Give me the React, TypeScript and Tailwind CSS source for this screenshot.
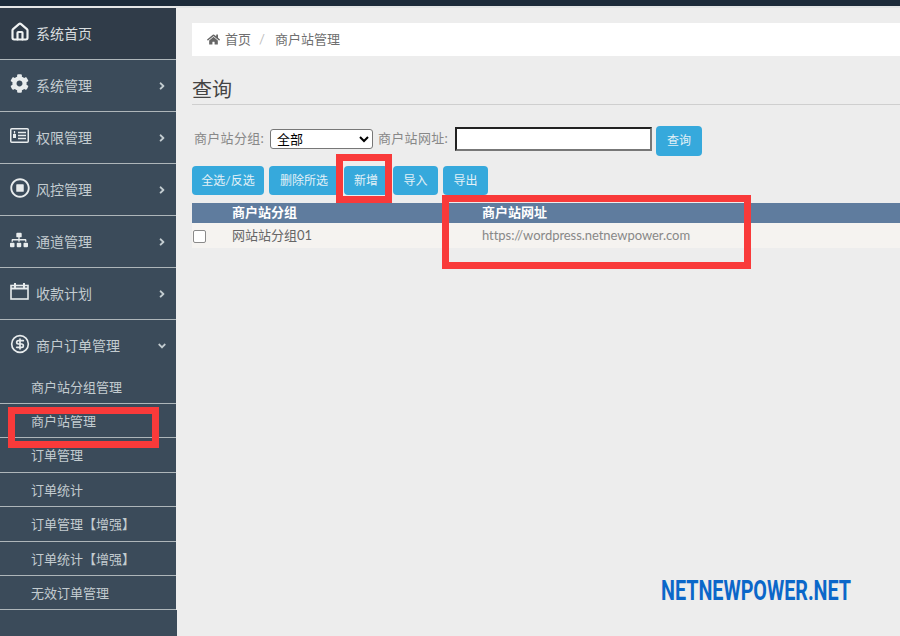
import { CircleDollarSign, House } from "lucide-react";
import { FaAngleDown, FaAngleRight, FaCog, FaHome, FaRegStopCircle, FaSitemap } from "react-icons/fa";

const font = "font-['Lato','Noto_Sans_CJK_SC',sans-serif]";

function CardIcon() {
  return (
    <svg width="19" height="15" viewBox="0 0 19 15" fill="none" stroke="currentColor">
      <rect x="0.75" y="0.75" width="17.5" height="13.5" rx="1" strokeWidth="1.5" />
      <path d="M8 4.5h8M8 7.5h8M8 10.5h8" strokeWidth="1.3" />
      <rect x="3" y="6" width="3" height="4" fill="currentColor" stroke="none" />
      <path d="M4.5 3v2.5" strokeWidth="1.3" />
    </svg>
  );
}

function CalendarIcon() {
  return (
    <svg width="19" height="17" viewBox="0 0 19 17" fill="none" stroke="currentColor">
      <rect x="1" y="2.5" width="17" height="13.5" strokeWidth="1.6" />
      <path d="M1 5.5h17" strokeWidth="2" />
      <path d="M5 0.5v4M14 0.5v4" strokeWidth="2" strokeLinecap="round" />
    </svg>
  );
}

const menus = [
  { name: "系统管理", icon: <FaCog size={19} /> },
  { name: "权限管理", icon: <CardIcon /> },
  { name: "风控管理", icon: <FaRegStopCircle size={20} /> },
  { name: "通道管理", icon: <FaSitemap size={18} /> },
  { name: "收款计划", icon: <CalendarIcon /> },
];

const subMenus = ["商户站分组管理", "商户站管理", "订单管理", "订单统计", "订单管理【增强】", "订单统计【增强】", "无效订单管理"];

function Sidebar() {
  return (
    <aside className="w-[176px] shrink-0 bg-[#3b4b5a] text-[#c3ccd0]">
      <div className="flex h-[52px] items-center border-b border-[#aeb6ba] bg-[#303c49] pl-[10px] text-sm text-[#d8dddf]">
        <span className="flex w-[26px] -translate-y-[2px] text-[#f0f3f3]">
          <House size={20} strokeWidth={2.6} />
        </span>
        系统首页
      </div>

      {menus.map((menu) => (
        <div key={menu.name} className="flex h-[52px] items-center border-b border-[#aeb6ba] pl-[10px] pr-[8px] text-sm">
          <span className="flex w-[26px] -translate-y-[2px] text-[#e8eced]">{menu.icon}</span>
          <span className="flex-1">{menu.name}</span>
          <FaAngleRight size={12} />
        </div>
      ))}

      <div className="flex h-[52px] items-center pl-[10px] pr-[8px] text-sm">
        <span className="flex w-[26px] -translate-y-[2px] text-[#e8eced]">
          <CircleDollarSign size={20} />
        </span>
        <span className="flex-1">商户订单管理</span>
        <FaAngleDown size={12} />
      </div>

      {subMenus.map((name, i) => (
        <div
          key={name}
          className={`flex items-center border-b border-[#aeb6ba] pl-[31px] text-[13px] ${i === 0 ? "h-[32px]" : "h-[34.4px] pt-[2px]"}`}
        >
          {name}
        </div>
      ))}
      <div className="h-[26px] w-[177px] bg-[#3b4b5a]" />
    </aside>
  );
}

function Btn({ label, className }: { label: string; className: string }) {
  return (
    <button className={`h-[29px] rounded-[4px] bg-[#36a9dc] text-center text-xs text-[#e4f1f7] ${className}`}>
      {label}
    </button>
  );
}

function Content() {
  return (
    <main className="min-w-0 flex-1 pl-[16px] pt-[15px]">
      <div className="flex h-[33px] items-center bg-white pl-[15px] text-[13px] text-[#6f6f6f]">
        <FaHome size={13} className="mr-[5px] text-[#666]" />
        首页
        <span className="ml-[8px] mr-[10px] text-[#bbb]">/</span>
        商户站管理
      </div>

      <h1 className="mt-[20px] h-[29px] border-b border-[#cfcfcf] text-xl leading-[26px] text-[#444]">查询</h1>

      <div className="mt-[21px] flex h-[30px] items-start text-[13px] text-[#888]">
        <div className="flex h-[26px] items-center">
          <span className="ml-[2px] w-[76px] tracking-[0.3px]">商户站分组:</span>
          <select className="h-[20px] w-[103px] rounded-[3px] border border-[#777] bg-white pl-[2px] text-[13px] text-black">
            <option>全部</option>
          </select>
          <span className="ml-[5px] w-[77px] tracking-[0.3px]">商户站网址:</span>
          <input className="h-[24px] w-[197px] border-2 border-t-[#222] border-l-[#222] border-r-[#777] border-b-[#777] bg-white" />
        </div>
        <Btn label="查询" className="ml-[4px] !h-[30px] w-[46px]" />
      </div>

      <div className="mt-[10px] flex gap-[5px]">
        <Btn label="全选/反选" className="w-[72px]" />
        <Btn label="删除所选" className="w-[70px]" />
        <Btn label="新增" className="w-[44px]" />
        <Btn label="导入" className="w-[45px]" />
        <Btn label="导出" className="w-[45px]" />
      </div>

      <div className="mt-[8px] flex h-[20px] items-center bg-[#5f7c9e] text-[13px] font-bold text-white">
        <span className="ml-[40px] w-[250px]">商户站分组</span>
        <span>商户站网址</span>
      </div>
      <div className="flex h-[25px] items-center bg-[#f5f3f0] text-[13px]">
        <span className="ml-[1px] h-[13px] w-[13px] translate-y-[1px] rounded-[2px] border border-[#8a8a8a] bg-white" />
        <span className="ml-[26px] w-[250px] text-[#666]">网站站分组01</span>
        <span className="tracking-[-0.05px] text-[#888]">https://wordpress.netnewpower.com</span>
      </div>
    </main>
  );
}

export default function App() {
  return (
    <div className={`relative h-[636px] w-[900px] overflow-hidden bg-[#ededed] ${font}`}>
      <div className="h-[6px] bg-[#1c2b3a]" />
      <div className="h-[2px] bg-[#e3e5e6]" />
      <div className="flex h-[628px]">
        <Sidebar />
        <Content />
      </div>

      {/* red annotation boxes */}
      <div className="absolute left-[336px] top-[154px] h-[49px] w-[56px] border-[7px] border-[#f93a3a]" />
      <div className="absolute left-[442px] top-[195px] h-[74px] w-[309px] border-[7px] border-[#f93a3a]" />
      <div className="absolute left-[8px] top-[407px] h-[41px] w-[151px] border-[7px] border-[#f93a3a]" />

      <div className="absolute left-[661px] top-[575px] origin-left scale-x-[0.73] whitespace-nowrap font-['Roboto',sans-serif] text-[27px] font-bold leading-[32px] text-[#0b67c9]">
        NETNEWPOWER.NET
      </div>
    </div>
  );
}
